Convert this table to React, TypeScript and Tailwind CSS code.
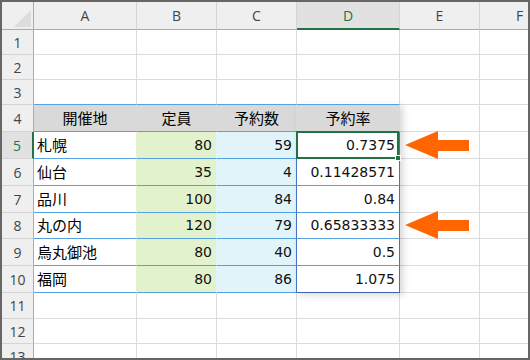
import React from 'react';

const columns = [
  { key: 'A', w: 'w-[103px]' },
  { key: 'B', w: 'w-[80px]' },
  { key: 'C', w: 'w-[80px]' },
  { key: 'D', w: 'w-[103px]' },
  { key: 'E', w: 'w-[80px]' },
  { key: 'F', w: 'w-[80px]' },
];

const rowHeights: Record<number, string> = {
  1: 'h-[25px]', 2: 'h-[25px]', 3: 'h-[25px]',
  4: 'h-[27px]', 5: 'h-[27px]', 6: 'h-[27px]', 7: 'h-[27px]',
  8: 'h-[26px]', 9: 'h-[27px]', 10: 'h-[27px]',
  11: 'h-[26px]', 12: 'h-[25px]', 13: 'h-[25px]',
};

const venues: [string, number, number, string][] = [
  ['札幌', 80, 59, '0.7375'],
  ['仙台', 35, 4, '0.11428571'],
  ['品川', 100, 84, '0.84'],
  ['丸の内', 120, 79, '0.65833333'],
  ['烏丸御池', 80, 40, '0.5'],
  ['福岡', 80, 86, '1.075'],
];

const headings = ['開催地', '定員', '予約数', '予約率'];

const jp = "font-['Noto_Sans_CJK_JP',sans-serif] text-[15px] text-black";
const num = "font-['DejaVu_Sans',sans-serif] text-[14px] text-[#111]";
const plain = 'border-r border-b border-r-[#dcdcdc] border-b-[#dcdcdc] bg-white';

function cellStyle(row: number, col: number): string {
  if (row === 3 && col <= 3) return 'border-r border-b border-r-[#dcdcdc] border-b-[#56a2e0] bg-white';
  if (row === 4 && col <= 3) return 'border-r border-b border-r-[#d9d9d9] border-b-[#56a2e0] bg-[#d9d9d9]';
  if (row >= 5 && row <= 10) {
    if (col === 0) return 'border-r border-b border-r-[#e2f2cc] border-b-[#56a2e0] bg-white';
    if (col === 1) return 'border-r border-b border-r-[#e0f4fa] border-b-[#56a2e0] bg-[#e2f2cc]';
    if (col === 2) return 'border-r border-b border-r-[#4472c4] border-b-[#56a2e0] bg-[#e0f4fa]';
    if (col === 3 && row === 10) return 'border-r border-b border-r-[#4472c4] border-b-[#4472c4] bg-white';
    if (col === 3) return 'border-r border-b border-r-[#4472c4] border-b-[#56a2e0] bg-white';
  }
  return plain;
}

function cellContent(row: number, col: number) {
  if (row === 4 && col <= 3) {
    return <span className={`w-full text-center ${jp}`}>{headings[col]}</span>;
  }
  const item = venues[row - 5];
  if (!item || col > 3) return null;
  if (col === 0) return <span className={`pl-[3px] ${jp}`}>{item[0]}</span>;
  return <span className={`w-full pr-[4px] text-right ${num}`}>{item[col]}</span>;
}

function Arrow({ top }: { top: string }) {
  return (
    <svg className={`absolute left-[402px] ${top} w-[66px] h-[30px]`} viewBox="0 0 66 30">
      <polygon points="1,15 34,1 34,10 65,10 65,21 34,21 34,29" fill="#ff6600" />
    </svg>
  );
}

export default function App() {
  return (
    <div className="relative w-[530px] h-[360px] overflow-hidden border-2 border-[#666666] bg-white">
      {/* column letters */}
      <div className="flex h-[28px] shrink-0">
        <div className="w-[32px] shrink-0 flex items-end justify-end pr-[2px] pb-[2px] bg-[#efefef] border-r border-b border-r-[#ababab] border-b-[#ababab]">
          <svg width="17" height="17" viewBox="0 0 17 17">
            <polygon points="17,0 17,17 0,17" fill="#dcdcdc" />
          </svg>
        </div>
        {columns.map((c) => (
          <div
            key={c.key}
            className={
              c.key === 'D'
                ? `${c.w} shrink-0 flex items-center justify-center bg-[#e1e1e1] border-r border-b-2 border-r-[#d4d4d4] border-b-[#217346] text-[#217346] font-['Open_Sans',sans-serif] text-[14px]`
                : `${c.w} shrink-0 flex items-center justify-center bg-[#efefef] border-r border-b border-r-[#d4d4d4] border-b-[#ababab] text-[#444] font-['Open_Sans',sans-serif] text-[14px]`
            }
          >
            {c.key}
          </div>
        ))}
      </div>

      {/* sheet rows */}
      {Object.keys(rowHeights).map((k) => {
        const row = Number(k);
        return (
          <div key={row} className={`flex shrink-0 ${rowHeights[row]}`}>
            <div
              className={
                row === 5
                  ? "w-[32px] shrink-0 flex items-center justify-center bg-[#e1e1e1] border-r-2 border-b border-r-[#217346] border-b-[#d4d4d4] text-[#217346] font-['Open_Sans',sans-serif] text-[14px]"
                  : "w-[32px] shrink-0 flex items-center justify-center bg-[#efefef] border-r border-b border-r-[#ababab] border-b-[#d4d4d4] text-[#444] font-['Open_Sans',sans-serif] text-[14px]"
              }
            >
              {row}
            </div>
            {columns.map((c, ci) => (
              <div key={c.key} className={`${c.w} shrink-0 flex items-center ${cellStyle(row, ci)}`}>
                {cellContent(row, ci)}
              </div>
            ))}
          </div>
        );
      })}

      {/* floating shadow under the rate column */}
      <div className="pointer-events-none absolute left-[294px] top-[101px] w-[104px] h-[189px] shadow-[3px_3px_7px_rgba(0,0,0,0.16)]" />

      {/* active cell D5 */}
      <div className="pointer-events-none absolute left-[294px] top-[129px] w-[103px] h-[28px] border-2 border-[#217346]">
        <div className="absolute right-[-4px] bottom-[-4px] w-[6px] h-[6px] bg-[#217346] border border-white" />
      </div>

      <Arrow top="top-[128px]" />
      <Arrow top="top-[208px]" />
    </div>
  );
}
